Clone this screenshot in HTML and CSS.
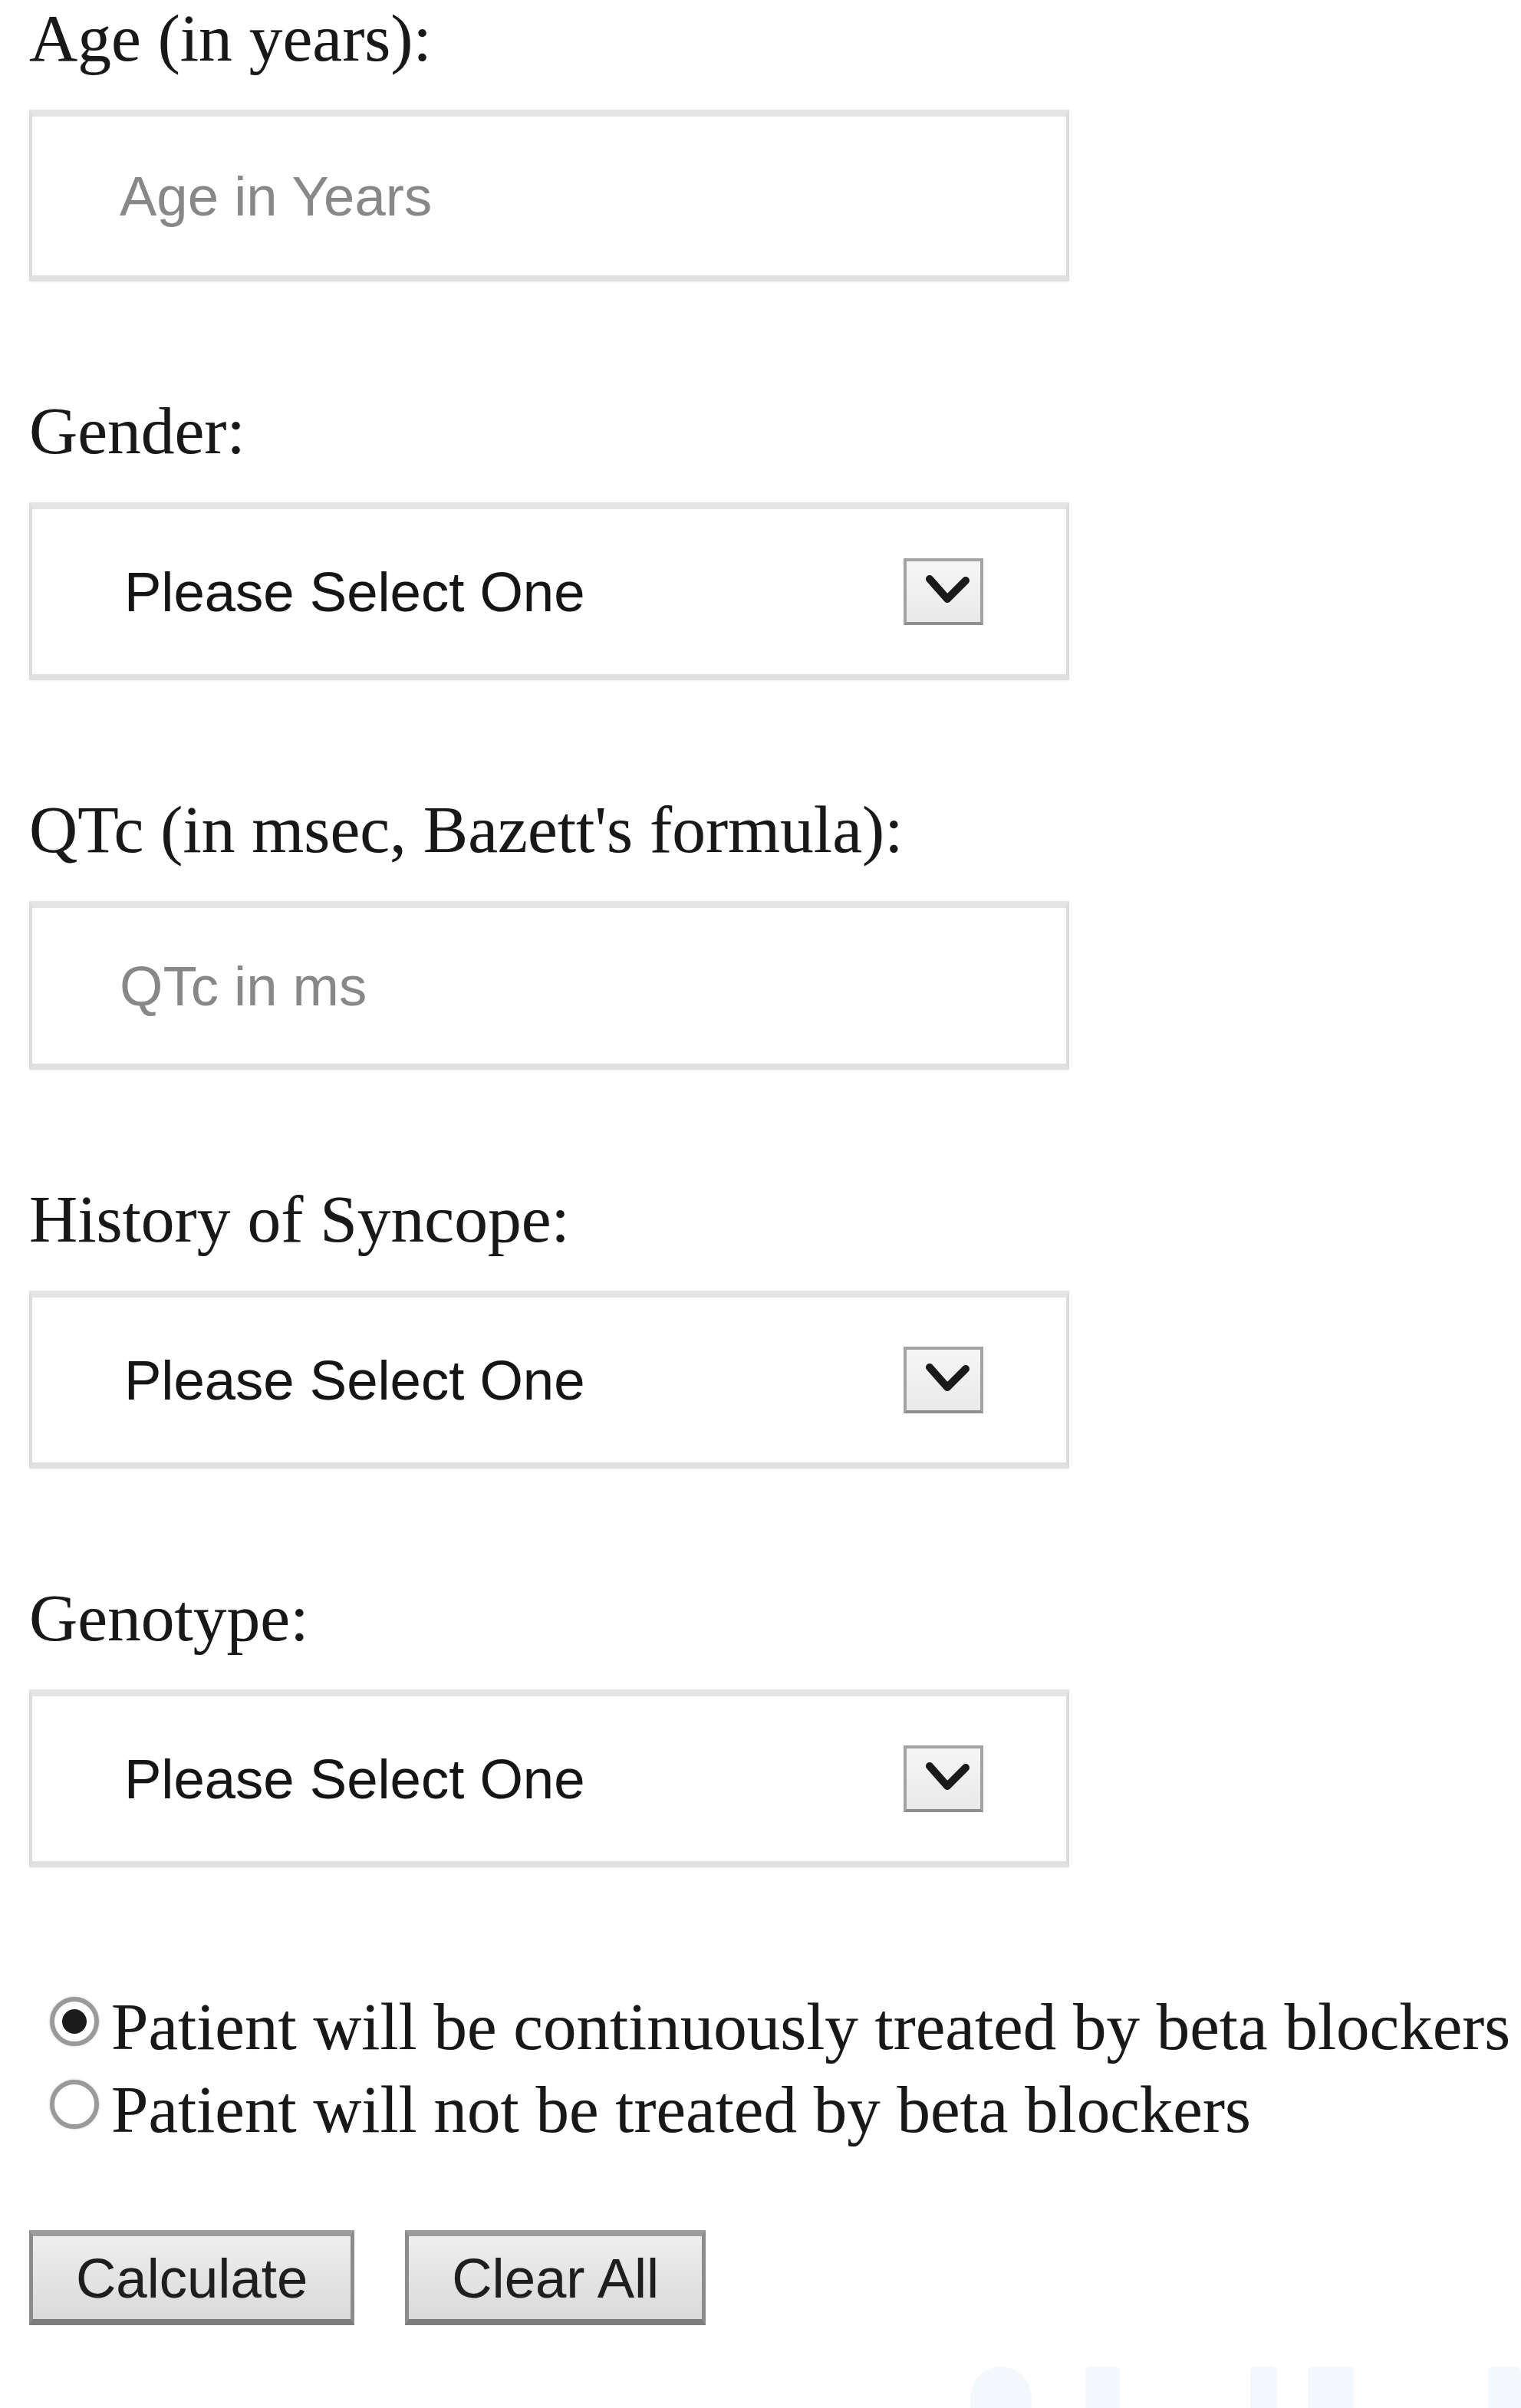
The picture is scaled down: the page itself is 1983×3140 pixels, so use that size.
FILE: index.html
```html
<!DOCTYPE html>
<html lang="en">
<head>
<meta charset="utf-8">
<title>LQTS Risk Calculator</title>
<link rel="stylesheet" href="styles.css">
</head>
<body>
<form class="calc">
  <div class="field">
    <label class="field-label" for="age">Age (in years):</label>
    <div class="box input-box"><input id="age" class="text-input" type="text" placeholder="Age in Years"></div>
  </div>

  <div class="field">
    <span class="field-label">Gender:</span>
    <div class="box select-box">
      <span class="select-text">Please Select One</span>
      <span class="arrow"><svg viewBox="0 0 96 79" width="96" height="79"><polyline points="30,23 53,49 77,25" fill="none" stroke="#1a1a1a" stroke-width="10" stroke-linecap="round" stroke-linejoin="round"/></svg></span>
    </div>
  </div>

  <div class="field">
    <label class="field-label" for="qtc">QTc (in msec, Bazett's formula):</label>
    <div class="box input-box short"><input id="qtc" class="text-input" type="text" placeholder="QTc in ms"></div>
  </div>

  <div class="field">
    <span class="field-label">History of Syncope:</span>
    <div class="box select-box">
      <span class="select-text">Please Select One</span>
      <span class="arrow"><svg viewBox="0 0 96 79" width="96" height="79"><polyline points="30,23 53,49 77,25" fill="none" stroke="#1a1a1a" stroke-width="10" stroke-linecap="round" stroke-linejoin="round"/></svg></span>
    </div>
  </div>

  <div class="field">
    <span class="field-label">Genotype:</span>
    <div class="box select-box">
      <span class="select-text">Please Select One</span>
      <span class="arrow"><svg viewBox="0 0 96 79" width="96" height="79"><polyline points="30,23 53,49 77,25" fill="none" stroke="#1a1a1a" stroke-width="10" stroke-linecap="round" stroke-linejoin="round"/></svg></span>
    </div>
  </div>

  <div class="options">
    <div class="option"><span class="radio checked"></span>Patient will be continuously treated by beta blockers</div>
    <div class="option"><span class="radio"></span>Patient will not be treated by beta blockers</div>
  </div>

  <div class="actions">
    <button type="button" class="btn">Calculate</button>
    <button type="button" class="btn">Clear All</button>
  </div>

  <div class="watermark">
    <span class="wm wm-a"></span>
    <span class="wm wm-b"></span>
    <span class="wm wm-c"></span>
    <span class="wm wm-d"></span>
    <span class="wm wm-e"></span>
  </div>
</form>
</body>
</html>
```

FILE: styles.css
```css
html, body {
  margin: 0;
  padding: 0;
  background: #ffffff;
}

body {
  height: 3140px;
  overflow: hidden;
  padding-left: 38px;
  box-sizing: border-box;
  color: #1b1b1b;
}

.calc {
  display: block;
}

.field {
  margin-bottom: 145px;
}

.field:last-of-type {
  margin-bottom: 0;
}

.field-label {
  display: block;
  font-family: "Liberation Serif", "Times New Roman", serif;
  font-size: 87.5px;
  line-height: 100px;
  color: #181818;
  white-space: nowrap;
  text-shadow: 0 0 1px rgba(0, 0, 0, 0.35);
}

.box {
  margin-top: 43px;
  width: 1356px;
  box-sizing: border-box;
  display: flex;
  align-items: center;
  background: #ffffff;
  border: 4px solid #dcdcdc;
  border-top: 9px solid #e4e4e4;
  border-bottom: 8px solid #e0e0e0;
  box-shadow: 0 1px 3px rgba(0, 0, 0, 0.05);
}

.input-box {
  height: 224px;
  padding-left: 114px;
}

.input-box.short {
  height: 220px;
}

.text-input {
  border: none;
  outline: none;
  background: transparent;
  padding: 0;
  margin: 0;
  width: 100%;
  font-family: "Liberation Sans", Arial, sans-serif;
  font-size: 72.5px;
  color: #222;
}

.text-input::placeholder {
  color: #888888;
}

.select-box {
  height: 232px;
  padding: 0 108px 0 120px;
  justify-content: space-between;
}

.select-text {
  font-family: "Liberation Sans", Arial, sans-serif;
  font-size: 72.5px;
  color: #151515;
  white-space: nowrap;
  text-shadow: 0 0 1px rgba(0, 0, 0, 0.3);
}

.arrow {
  display: block;
  width: 104px;
  height: 87px;
  box-sizing: border-box;
  border: 4px solid #a3a3a3;
  border-bottom-color: #8f8f8f;
  background: linear-gradient(#f6f6f6, #e9e9e9);
}

.arrow svg {
  display: block;
}

.options {
  margin-top: 154px;
  font-family: "Liberation Serif", "Times New Roman", serif;
  font-size: 87px;
  line-height: 108px;
  color: #181818;
  white-space: nowrap;
  text-shadow: 0 0 1px rgba(0, 0, 0, 0.35);
}

.radio {
  display: inline-block;
  width: 64px;
  height: 64px;
  box-sizing: border-box;
  margin: 0 16px 0 27px;
  border: 6px solid #9a9a9a;
  border-radius: 50%;
  background: #fff;
  vertical-align: 4px;
  position: relative;
  box-shadow: 0 0 3px rgba(0, 0, 0, 0.25);
}

.radio.checked::after {
  content: "";
  position: absolute;
  left: 50%;
  top: 50%;
  width: 32px;
  height: 32px;
  margin: -16px 0 0 -16px;
  border-radius: 50%;
  background: #1c1c1c;
}

.actions {
  margin-top: 103px;
  display: flex;
  gap: 66px;
}

.btn {
  height: 124px;
  padding: 0 56px;
  margin: 0;
  box-sizing: border-box;
  font-family: "Liberation Sans", Arial, sans-serif;
  font-size: 72.5px;
  color: #1e1e1e;
  text-shadow: 0 0 1px rgba(0, 0, 0, 0.3);
  border: 5px solid #8c8c8c;
  border-top: 8px solid #9c9c9c;
  border-bottom: 8px solid #7c7c7c;
  border-radius: 0;
  background: linear-gradient(#eeeeee, #dadada);
}

.watermark {
  margin-top: 54px;
  display: flex;
  height: 60px;
}

.wm {
  display: block;
  height: 60px;
  background: #f3f8fc;
  border-radius: 6px;
}

.wm-a { width: 80px; margin-left: 1227px; border-radius: 40px 40px 0 0; }
.wm-b { width: 45px; margin-left: 70px; }
.wm-c { width: 35px; margin-left: 170px; }
.wm-d { width: 60px; margin-left: 40px; }
.wm-e { width: 43px; margin-left: 175px; }
```
